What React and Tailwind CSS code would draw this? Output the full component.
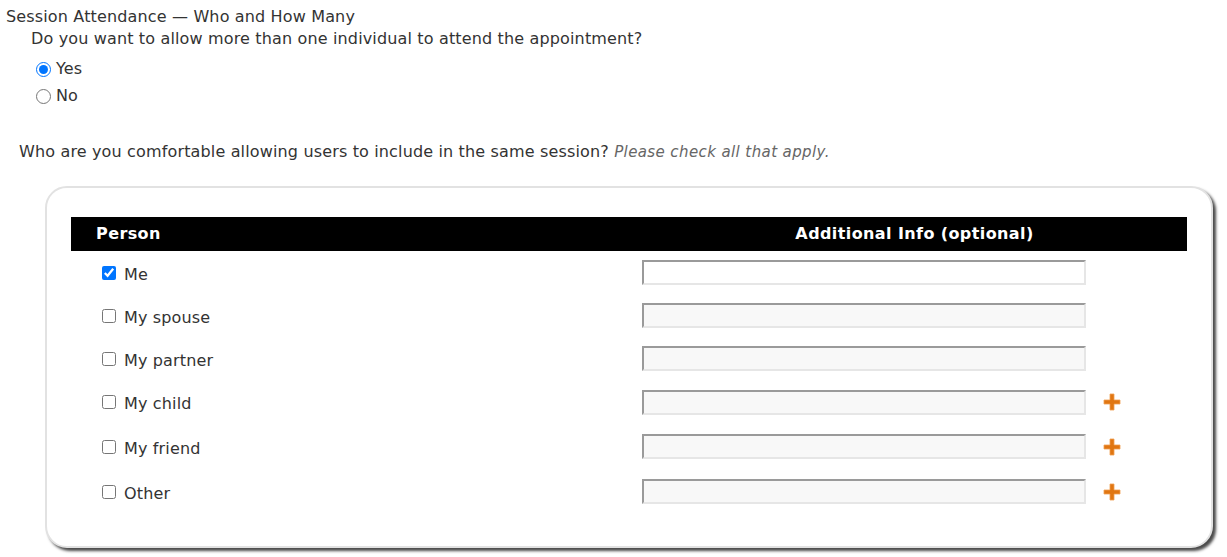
import React from "react";

const rows = [
  { label: "Me", checked: true, plus: false, h: "h-[43px]", enabled: true },
  { label: "My spouse", checked: false, plus: false, h: "h-[43px]" },
  { label: "My partner", checked: false, plus: false, h: "h-[43px]" },
  { label: "My child", checked: false, plus: true, h: "h-[44px]" },
  { label: "My friend", checked: false, plus: true, h: "h-[45px]" },
  { label: "Other", checked: false, plus: true, h: "h-[45px]" },
];

function Plus() {
  return (
    <svg width="18" height="18" viewBox="0 0 18 18" className="block">
      <path
        d="M7 1h4v6h6v4h-6v6H7v-6H1V7h6z"
        fill="#e07612"
        stroke="#f0a050"
        strokeWidth="0.8"
      />
    </svg>
  );
}

export default function App() {
  return (
    <div
      className="w-[1227px] h-[557px] bg-white text-[#333] overflow-hidden text-[16px] tracking-[0.15px]"
      style={{ fontFamily: '"DejaVu Sans", Verdana, sans-serif' }}
    >
      <div className="pl-[6px] pt-[6px] leading-[22px]">
        Session Attendance — Who and How Many
      </div>
      <div className="pl-[31px] leading-[22px]">
        Do you want to allow more than one individual to attend the appointment?
      </div>
      <div className="pl-[36px] pt-[8px] flex flex-col gap-[5px] leading-[22px]">
        <label className="flex items-center gap-[5px]">
          <input type="radio" name="multi" defaultChecked className="m-0 w-[15px] h-[15px]" />
          <span>Yes</span>
        </label>
        <label className="flex items-center gap-[5px]">
          <input type="radio" name="multi" className="m-0 w-[15px] h-[15px]" />
          <span>No</span>
        </label>
      </div>
      <div className="pl-[19px] pt-[34px] leading-[22px]">
        Who are you comfortable allowing users to include in the same session?{" "}
        <span className="italic text-[#666] text-[15px] tracking-[0.4px]">Please check all that apply.</span>
      </div>
      <div className="ml-[45px] mt-[23px] w-[1168px] h-[362px] rounded-[22px] border-2 border-[#e2e2e2] bg-white shadow-[3px_3px_3px_#4a4a4a] pt-[29px] pl-[24px] pr-[24px]">
        <div className="flex h-[34px] bg-black text-white font-bold text-[16px] tracking-[0.4px] items-center">
          <div className="w-[571px] pl-[25px]">Person</div>
          <div className="flex-1 text-center">Additional Info (optional)</div>
        </div>
        {rows.map((r) => (
          <div key={r.label} className={`flex items-center ${r.h}`}>
            <div className="w-[571px] pl-[31px] flex items-center gap-[8px]">
              <input
                type="checkbox"
                defaultChecked={r.checked}
                className="m-0 w-[14px] h-[14px]"
              />
              <span className="relative top-[2px]">{r.label}</span>
            </div>
            <input
              type="text"
              className={`w-[444px] h-[25px] border-2 border-t-[#9a9a9a] border-l-[#9a9a9a] border-b-[#e6e6e6] border-r-[#e6e6e6] ${
                r.enabled ? "bg-white" : "bg-[#f8f8f8]"
              } outline-none`}
            />
            {r.plus && (
              <div className="ml-[17px]">
                <Plus />
              </div>
            )}
          </div>
        ))}
      </div>
    </div>
  );
}
